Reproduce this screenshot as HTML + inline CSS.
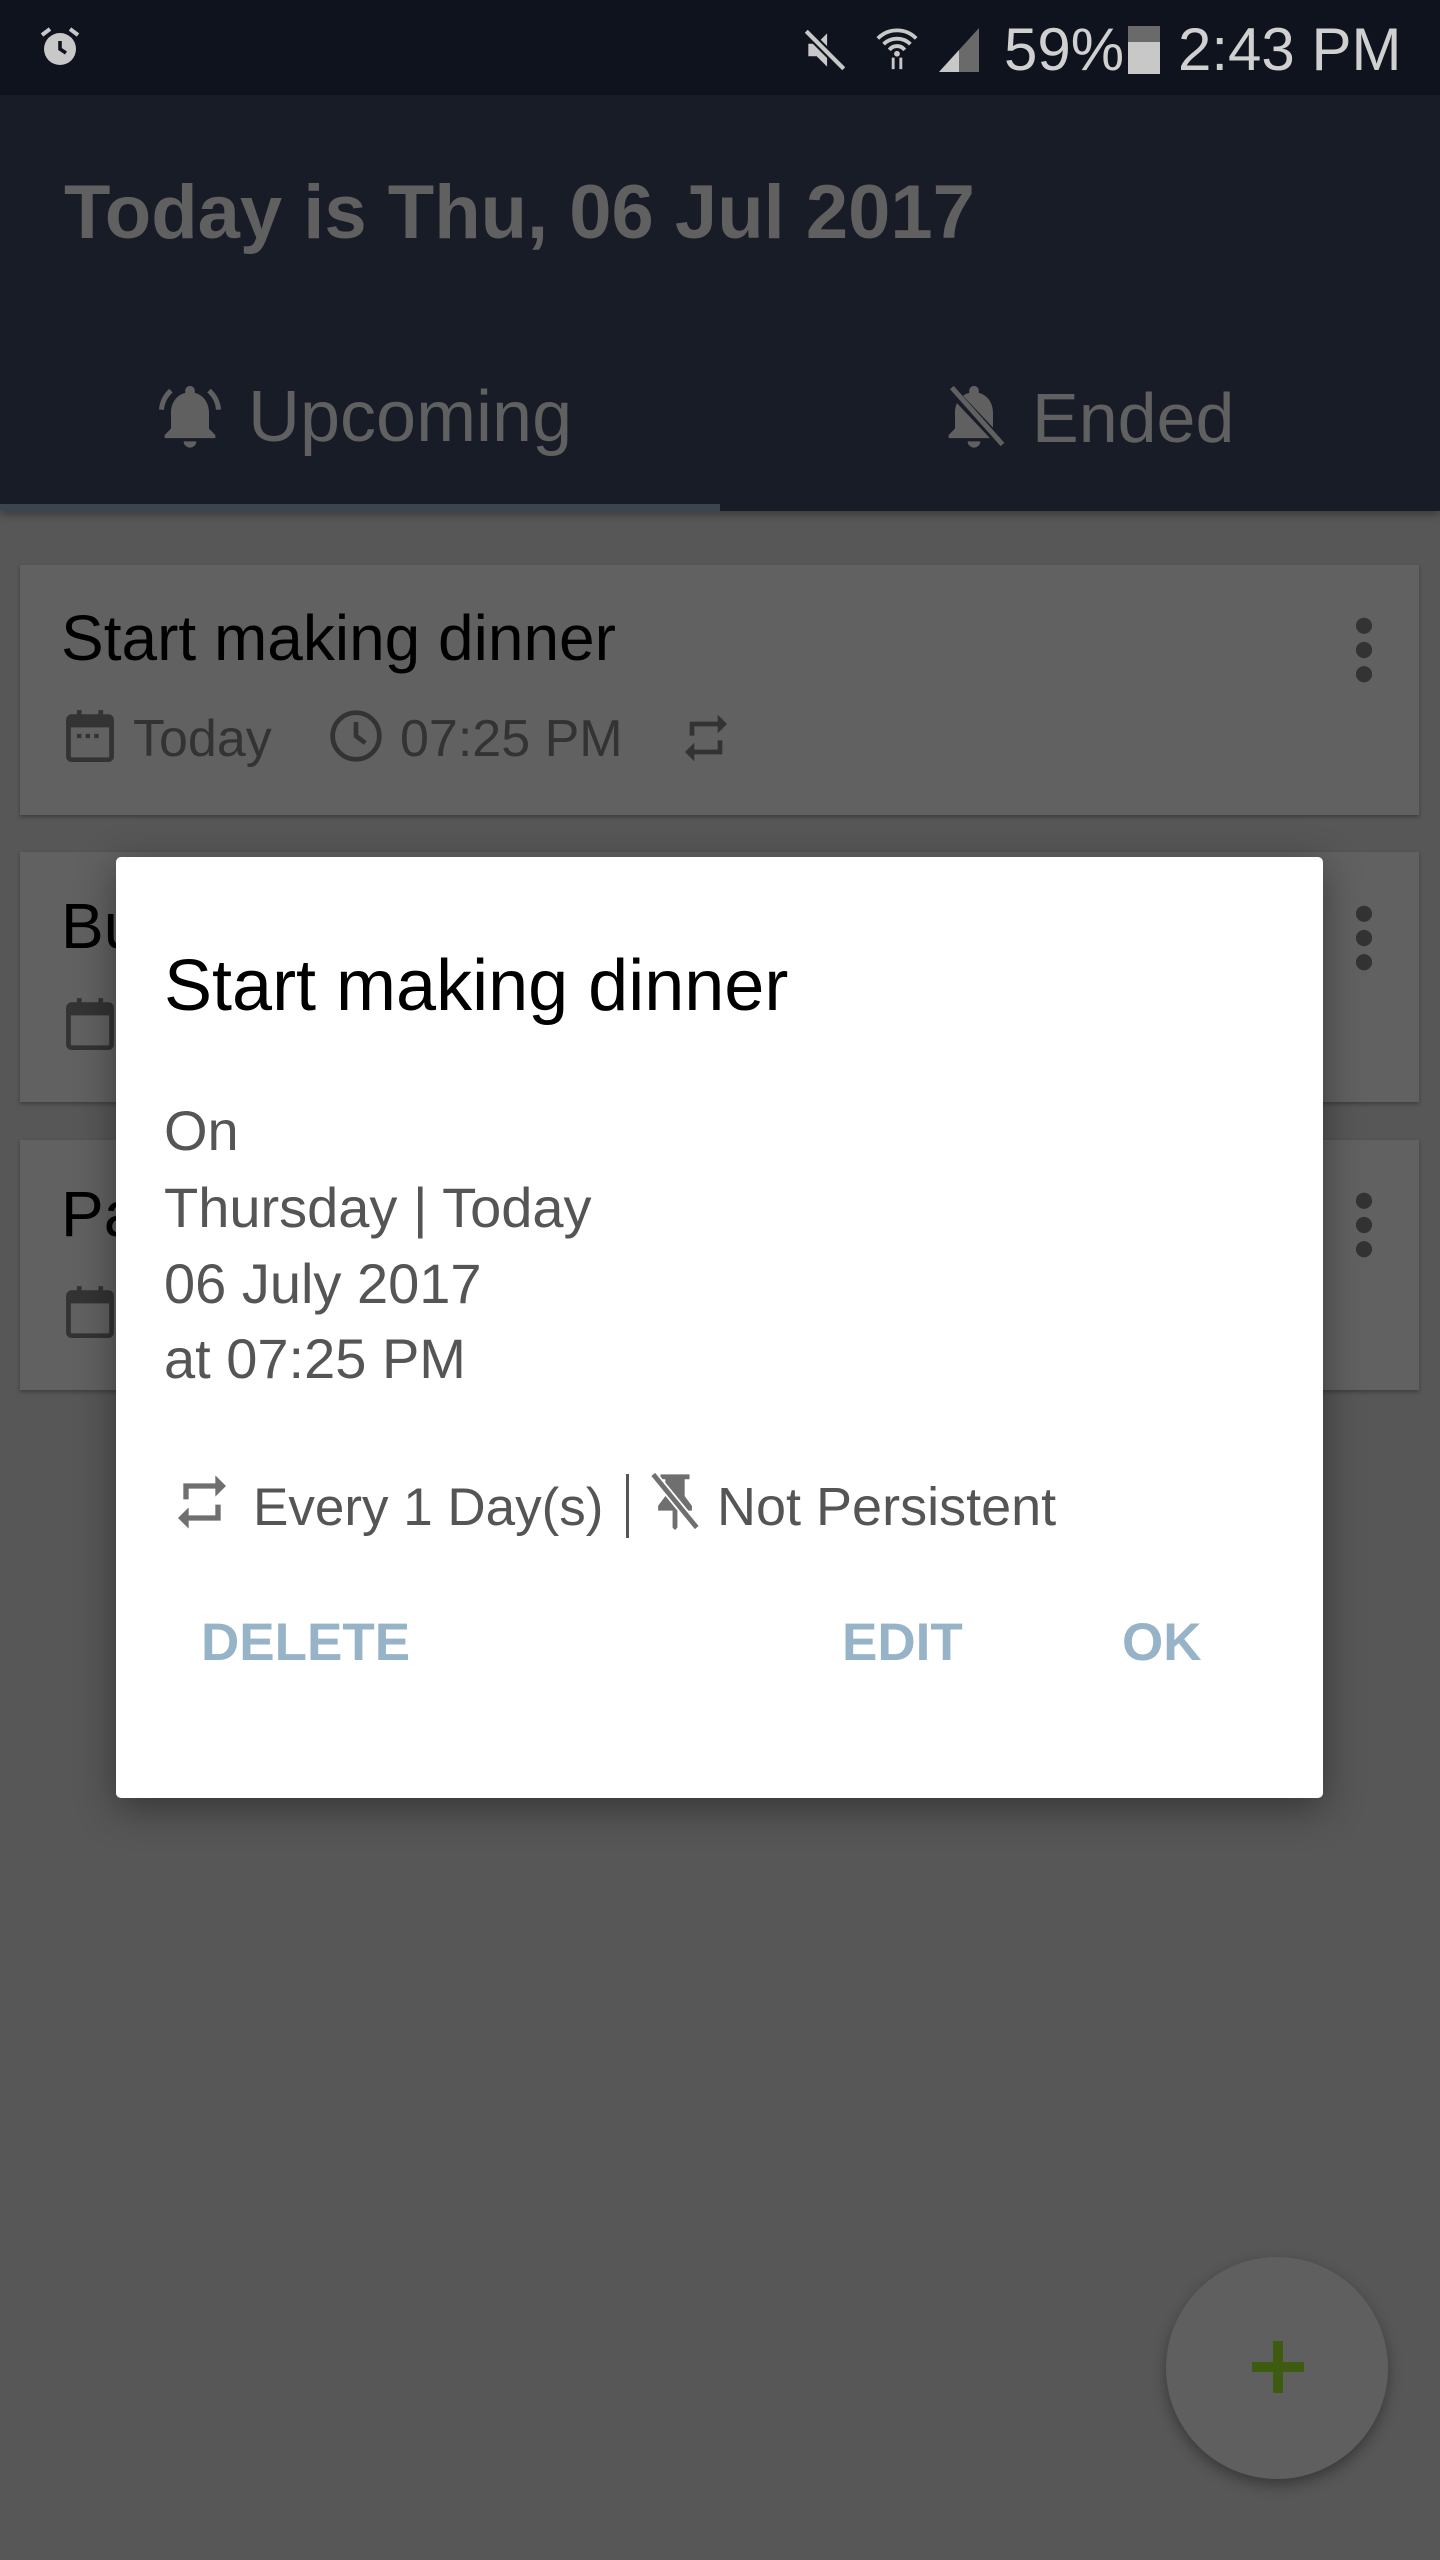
<!DOCTYPE html>
<html><head><meta charset="utf-8">
<style>
*{margin:0;padding:0;box-sizing:border-box}
body{width:1440px;height:2560px;background:#575757;font-family:"Liberation Sans",sans-serif;position:relative;overflow:hidden}
.abs{position:absolute}
.t{position:absolute;white-space:nowrap;line-height:1}
</style></head><body>
<!-- status bar -->
<div class="abs" style="left:0;top:0;width:1440px;height:95px;background:#0f131d"></div>
<svg class="abs" style="left:36px;top:22px" width="48" height="50" viewBox="0 0 24 24"><circle cx="12" cy="13" r="8" fill="#c8c8c8"/><path d="M12 9v4l3 2" stroke="#0f131d" stroke-width="1.8" fill="none"/><path d="M3 6l4-3M21 6l-4-3" stroke="#c8c8c8" stroke-width="2"/></svg>
<svg class="abs" style="left:800px;top:25px" width="50" height="50" viewBox="0 0 24 24"><path d="M4 9h4l5-5v16l-5-5H4z" fill="#c8c8c8"/><path d="M3 3l18 18" stroke="#0f131d" stroke-width="4"/><path d="M3 3l18 18" stroke="#c8c8c8" stroke-width="2"/></svg>
<svg class="abs" style="left:874px;top:22px" width="46" height="52" viewBox="0 0 24 26"><path d="M2 8a14 14 0 0 1 20 0M5 11a10 10 0 0 1 14 0M8 14a5 5 0 0 1 8 0" stroke="#c8c8c8" stroke-width="2" fill="none"/><circle cx="12" cy="16" r="1.5" fill="#c8c8c8"/><path d="M10 18v6M14 24v-6" stroke="#c8c8c8" stroke-width="1.5"/></svg>
<svg class="abs" style="left:934px;top:24px" width="50" height="48" viewBox="0 0 24 24"><path d="M2 24L22 2v22z" fill="#6a6a6a"/><path d="M2 24l10-11v11z" fill="#c8c8c8"/></svg>
<div class="t" style="left:1004px;top:20px;font-size:60px;color:#d0d0d0">59%</div>
<div class="abs" style="left:1128px;top:26px;width:32px;height:48px;background:#c8c8c8"></div>
<div class="abs" style="left:1128px;top:26px;width:32px;height:16px;background:#6a6a6a"></div>
<div class="t" style="left:1178px;top:20px;font-size:60px;color:#d0d0d0">2:43 PM</div>
<!-- app bar -->
<div class="abs" style="left:0;top:95px;width:1440px;height:416px;background:#181c27;box-shadow:0 4px 8px rgba(0,0,0,.3)"></div>
<div class="t" style="left:64px;top:175px;font-size:76px;font-weight:bold;color:#606060">Today is Thu, 06 Jul 2017</div>
<svg class="abs" style="left:152px;top:378px" width="76" height="76" viewBox="0 0 24 24"><path d="M12 22a2 2 0 0 0 2-2h-4a2 2 0 0 0 2 2zm6-6v-5c0-3-1.6-5.6-4.5-6.3V4a1.5 1.5 0 0 0-3 0v.7C7.6 5.4 6 8 6 11v5l-2 2v1h16v-1z" fill="#606060"/><path d="M3 10a9 9 0 0 1 3-6M21 10a9 9 0 0 0-3-6" stroke="#606060" stroke-width="1.6" fill="none"/></svg>
<div class="t" style="left:248px;top:381px;font-size:72px;color:#606060">Upcoming</div>
<svg class="abs" style="left:936px;top:378px" width="76" height="76" viewBox="0 0 24 24"><path d="M12 22a2 2 0 0 0 2-2h-4a2 2 0 0 0 2 2zm6-6v-5c0-3-1.6-5.6-4.5-6.3V4a1.5 1.5 0 0 0-3 0v.7C7.6 5.4 6 8 6 11v5l-2 2v1h16v-1z" fill="#606060"/><path d="M4 3l17 18" stroke="#181c27" stroke-width="3"/><path d="M5 3l16 18" stroke="#606060" stroke-width="1.6"/></svg>
<div class="t" style="left:1032px;top:383px;font-size:70px;color:#606060">Ended</div>
<div class="abs" style="left:0;top:504px;width:720px;height:7px;background:#3a4550"></div>
<!-- cards -->
<div class="abs" style="left:20px;top:565px;width:1399px;height:250px;background:#616161;box-shadow:0 2px 4px rgba(0,0,0,.3)"></div>
<div class="abs" style="left:20px;top:852px;width:1399px;height:250px;background:#616161;box-shadow:0 2px 4px rgba(0,0,0,.3)"></div>
<div class="abs" style="left:20px;top:1140px;width:1399px;height:250px;background:#616161;box-shadow:0 2px 4px rgba(0,0,0,.3)"></div>
<div class="t" style="left:61px;top:606px;font-size:64px;color:#000">Start making dinner</div>
<div class="t" style="left:61px;top:894px;font-size:64px;color:#000">Bu</div>
<div class="t" style="left:61px;top:1182px;font-size:64px;color:#000">Pa</div>
<svg class="abs" style="left:64px;top:708px" width="52" height="56" viewBox="0 0 24 26"><rect x="2" y="4" width="20" height="20" rx="1.5" fill="none" stroke="#333" stroke-width="2.2"/><rect x="2" y="4" width="20" height="5" fill="#333"/><path d="M7 1v4M17 1v4" stroke="#333" stroke-width="2.2"/><path d="M6 13h2M10 13h2M14 13h2" stroke="#333" stroke-width="2"/></svg>
<svg class="abs" style="left:64px;top:996px" width="52" height="56" viewBox="0 0 24 26"><rect x="2" y="4" width="20" height="20" rx="1.5" fill="none" stroke="#333" stroke-width="2.2"/><rect x="2" y="4" width="20" height="5" fill="#333"/><path d="M7 1v4M17 1v4" stroke="#333" stroke-width="2.2"/></svg>
<svg class="abs" style="left:64px;top:1284px" width="52" height="56" viewBox="0 0 24 26"><rect x="2" y="4" width="20" height="20" rx="1.5" fill="none" stroke="#333" stroke-width="2.2"/><rect x="2" y="4" width="20" height="5" fill="#333"/><path d="M7 1v4M17 1v4" stroke="#333" stroke-width="2.2"/></svg>
<div class="t" style="left:133px;top:713px;font-size:52px;color:#333">Today</div>
<svg class="abs" style="left:328px;top:708px" width="56" height="56" viewBox="0 0 24 24"><circle cx="12" cy="12" r="10" fill="none" stroke="#333" stroke-width="2"/><path d="M12 6v6l4 3" stroke="#333" stroke-width="2" fill="none"/></svg>
<div class="t" style="left:400px;top:713px;font-size:52px;color:#333">07:25 PM</div>
<svg class="abs" style="left:678px;top:710px" width="56" height="56" viewBox="0 0 24 24"><path d="M7 7h10v3l4-4-4-4v3H5v6h2zm10 10H7v-3l-4 4 4 4v-3h12v-6h-2z" fill="#333"/></svg>
<svg class="abs" style="left:1350px;top:615px" width="28" height="70" viewBox="0 0 10 26"><circle cx="5" cy="4" r="3" fill="#333"/><circle cx="5" cy="13" r="3" fill="#333"/><circle cx="5" cy="22" r="3" fill="#333"/></svg>
<svg class="abs" style="left:1350px;top:903px" width="28" height="70" viewBox="0 0 10 26"><circle cx="5" cy="4" r="3" fill="#333"/><circle cx="5" cy="13" r="3" fill="#333"/><circle cx="5" cy="22" r="3" fill="#333"/></svg>
<svg class="abs" style="left:1350px;top:1190px" width="28" height="70" viewBox="0 0 10 26"><circle cx="5" cy="4" r="3" fill="#333"/><circle cx="5" cy="13" r="3" fill="#333"/><circle cx="5" cy="22" r="3" fill="#333"/></svg>
<!-- dialog -->
<div class="abs" style="left:116px;top:857px;width:1207px;height:941px;background:#fff;border-radius:5px;box-shadow:0 10px 40px rgba(0,0,0,.4)"></div>
<div class="t" style="left:164px;top:950px;font-size:72px;color:#000">Start making dinner</div>
<div class="t" style="left:164px;top:1103px;font-size:56px;color:#555">On</div>
<div class="t" style="left:164px;top:1180px;font-size:56px;color:#555">Thursday | Today</div>
<div class="t" style="left:164px;top:1256px;font-size:56px;color:#555">06 July 2017</div>
<div class="t" style="left:164px;top:1331px;font-size:56px;color:#555">at 07:25 PM</div>
<svg class="abs" style="left:170px;top:1470px" width="64" height="64" viewBox="0 0 24 24"><path d="M7 7h10v3l4-4-4-4v3H5v6h2zm10 10H7v-3l-4 4 4 4v-3h12v-6h-2z" fill="#6f6f6f"/></svg>
<div class="t" style="left:253px;top:1481px;font-size:53px;color:#555">Every 1 Day(s)</div>
<div class="abs" style="left:626px;top:1474px;width:3px;height:64px;background:#555"></div>
<svg class="abs" style="left:646px;top:1468px" width="58" height="66" viewBox="0 0 24 26"><path d="M6 2h12v2h-2v7l3 4v2h-6v7l-1 1-1-1v-7H5v-2l3-4V4H6z" fill="#6f6f6f"/><path d="M3 2l18 22" stroke="#fff" stroke-width="3.5"/><path d="M3 2l18 22" stroke="#6f6f6f" stroke-width="2"/></svg>
<div class="t" style="left:717px;top:1480px;font-size:54px;color:#555">Not Persistent</div>
<div class="t" style="left:201px;top:1616px;font-size:53px;font-weight:bold;color:#97b3c8">DELETE</div>
<div class="t" style="left:842px;top:1616px;font-size:53px;font-weight:bold;color:#97b3c8">EDIT</div>
<div class="t" style="left:1122px;top:1616px;font-size:53px;font-weight:bold;color:#97b3c8">OK</div>
<!-- fab -->
<div class="abs" style="left:1166px;top:2257px;width:222px;height:222px;border-radius:50%;background:#5f5f5f;box-shadow:0 6px 14px rgba(0,0,0,.35)"></div>
<div class="abs" style="left:1252px;top:2362px;width:52px;height:10px;background:#3d5c12"></div>
<div class="abs" style="left:1273px;top:2341px;width:10px;height:52px;background:#3d5c12"></div>
</body></html>
